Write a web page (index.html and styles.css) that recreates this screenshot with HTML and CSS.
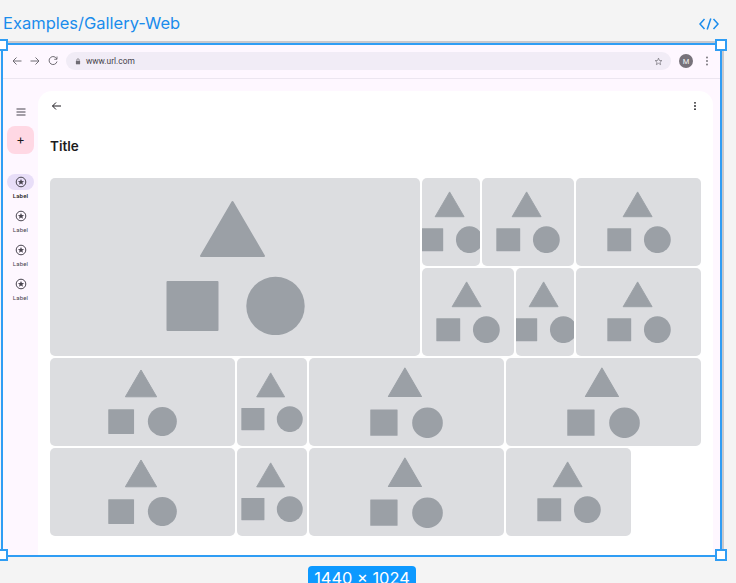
FILE: index.html
```html
<!DOCTYPE html>
<html lang="en">
<head>
  <meta charset="UTF-8" />
  <title>Examples/Gallery-Web</title>
  <link rel="stylesheet" href="styles.css">
</head>
<body>
  <svg class="defs" aria-hidden="true">
    <symbol id="shapes" viewBox="0 0 139 135">
      <polygon points="66.5,2 98,56 35,56" fill="#9ba0a6" stroke="#9ba0a6" stroke-width="2" stroke-linejoin="round"/>
      <rect x="0.5" y="81" width="52" height="50" rx="1" fill="#9ba0a6"/>
      <circle cx="109.5" cy="106" r="29.2" fill="#9ba0a6"/>
    </symbol>
    <symbol id="star-circle" viewBox="0 0 24 24">
      <circle cx="12" cy="12" r="9.6" fill="none" stroke="#49454f" stroke-width="2"/>
      <polygon points="12,5.8 13.8,10 18.2,10.3 14.8,13.2 15.9,17.6 12,15.2 8.1,17.6 9.2,13.2 5.8,10.3 10.2,10" fill="#49454f"/>
    </symbol>
  </svg>

  <header class="top-bar">
    <h1 class="page-name">Examples/Gallery-Web</h1>
    <svg class="code-icon" viewBox="0 0 20 12" fill="none" stroke="#1a8cec" stroke-width="1.5">
      <path d="M5.5 1 L1 6 L5.5 11"/>
      <path d="M11.8 0.5 L8.2 11.5"/>
      <path d="M14.5 1 L19 6 L14.5 11"/>
    </svg>
  </header>

  <div class="frame">
    <span class="handle handle-tl"></span>
    <span class="handle handle-tr"></span>
    <span class="handle handle-bl"></span>
    <span class="handle handle-br"></span>

    <div class="browser-bar">
      <svg class="bar-icon" viewBox="0 0 12 12" fill="none" stroke="#6f6c73" stroke-width="1"><path d="M10.5 6 H2 M5.5 2.5 L2 6 L5.5 9.5"/></svg>
      <svg class="bar-icon" viewBox="0 0 12 12" fill="none" stroke="#6f6c73" stroke-width="1"><path d="M1.5 6 H10 M6.5 2.5 L10 6 L6.5 9.5"/></svg>
      <svg class="bar-icon" viewBox="0 0 12 12" fill="none" stroke="#6f6c73" stroke-width="1"><path d="M9.8 4 A4 4 0 1 0 10 6.5"/><path d="M10 1.5 V4.3 H7.2" stroke-width="0.9"/></svg>
      <div class="url-pill">
        <svg class="lock-icon" viewBox="0 0 8 10"><path d="M1 4 H7 V9 H1 Z" fill="#6f6c73"/><path d="M2.3 4 V2.8 A1.7 1.7 0 0 1 5.7 2.8 V4" fill="none" stroke="#6f6c73"/></svg>
        <span class="url-text">www.url.com</span>
        <svg class="star-icon" viewBox="0 0 12 12"><polygon points="6,1.5 7.2,4.6 10.5,4.8 8,6.9 8.8,10.2 6,8.4 3.2,10.2 4,6.9 1.5,4.8 4.8,4.6" fill="none" stroke="#6f6c73" stroke-width="0.9"/></svg>
      </div>
      <span class="avatar">M</span>
      <svg class="dots-icon" viewBox="0 0 4 12"><circle cx="2" cy="2.5" r="0.9" fill="#6f6c73"/><circle cx="2" cy="6" r="0.9" fill="#6f6c73"/><circle cx="2" cy="9.5" r="0.9" fill="#6f6c73"/></svg>
    </div>

    <div class="app">
      <nav class="rail">
        <svg class="menu-icon" viewBox="0 0 12 12" fill="none" stroke="#49454f" stroke-width="1"><path d="M1.5 3 H10.5 M1.5 6 H10.5 M1.5 9 H10.5"/></svg>
        <div class="fab">+</div>
        <div class="rail-items">
          <div class="rail-item active">
            <span class="rail-pill"><svg class="rail-icon"><use href="#star-circle"/></svg></span>
            <span class="rail-label">Label</span>
          </div>
          <div class="rail-item">
            <span class="rail-pill"><svg class="rail-icon"><use href="#star-circle"/></svg></span>
            <span class="rail-label">Label</span>
          </div>
          <div class="rail-item">
            <span class="rail-pill"><svg class="rail-icon"><use href="#star-circle"/></svg></span>
            <span class="rail-label">Label</span>
          </div>
          <div class="rail-item">
            <span class="rail-pill"><svg class="rail-icon"><use href="#star-circle"/></svg></span>
            <span class="rail-label">Label</span>
          </div>
        </div>
      </nav>

      <main class="card">
        <div class="card-head">
          <svg class="head-icon" viewBox="0 0 12 12" fill="none" stroke="#1d1b20" stroke-width="1"><path d="M11 6 H2.5 M6 2.5 L2.5 6 L6 9.5"/></svg>
          <svg class="head-icon" viewBox="0 0 12 12"><circle cx="6" cy="2.8" r="0.9" fill="#1d1b20"/><circle cx="6" cy="6" r="0.9" fill="#1d1b20"/><circle cx="6" cy="9.2" r="0.9" fill="#1d1b20"/></svg>
        </div>
        <h2 class="card-title">Title</h2>

        <div class="gallery">
          <div class="gallery-top">
            <div class="tile tile-big"><svg class="shapes shapes-xl"><use href="#shapes"/></svg></div>
            <div class="gallery-side">
              <div class="row">
                <div class="tile w58"><svg class="shapes shapes-64"><use href="#shapes"/></svg></div>
                <div class="tile w92"><svg class="shapes shapes-64"><use href="#shapes"/></svg></div>
                <div class="tile w125"><svg class="shapes shapes-64"><use href="#shapes"/></svg></div>
              </div>
              <div class="row">
                <div class="tile w92"><svg class="shapes shapes-64"><use href="#shapes"/></svg></div>
                <div class="tile w58"><svg class="shapes shapes-64"><use href="#shapes"/></svg></div>
                <div class="tile w125"><svg class="shapes shapes-64"><use href="#shapes"/></svg></div>
              </div>
            </div>
          </div>
          <div class="row">
            <div class="tile w185"><svg class="shapes shapes-69"><use href="#shapes"/></svg></div>
            <div class="tile w70"><svg class="shapes shapes-62"><use href="#shapes"/></svg></div>
            <div class="tile w195"><svg class="shapes shapes-73"><use href="#shapes"/></svg></div>
            <div class="tile w195"><svg class="shapes shapes-73"><use href="#shapes"/></svg></div>
          </div>
          <div class="row">
            <div class="tile w185"><svg class="shapes shapes-69"><use href="#shapes"/></svg></div>
            <div class="tile w70"><svg class="shapes shapes-62"><use href="#shapes"/></svg></div>
            <div class="tile w195"><svg class="shapes shapes-73"><use href="#shapes"/></svg></div>
            <div class="tile w125"><svg class="shapes shapes-64"><use href="#shapes"/></svg></div>
          </div>
        </div>
      </main>
    </div>
  </div>

  <div class="size-row">
    <span class="size-badge">1440 × 1024</span>
  </div>
</body>
</html>
```

FILE: styles.css
```css
body, html {
  margin: 0;
  padding: 0;
  height: 583px;
  overflow: hidden;
}

body {
  background-color: #f4f4f4;
  font-family: Inter, Arial, sans-serif;
}

.defs {
  display: none;
}

.top-bar {
  display: flex;
  align-items: center;
  justify-content: space-between;
  height: 43px;
  padding: 0 17px 0 3px;
  box-sizing: border-box;
}

.page-name {
  margin: 3px 0 0;
  font-size: 16.5px;
  font-weight: 400;
  color: #1a8cec;
}

.code-icon {
  width: 20px;
  height: 12px;
  margin-top: 4px;
}

.frame {
  position: relative;
  box-sizing: border-box;
  display: flex;
  flex-direction: column;
  width: 721px;
  height: 514px;
  margin-left: 1px;
  border: 2px solid #2f9df4;
  background-color: #fef7ff;
  box-shadow: 2px -2px 0 #c8c8cc;
}

.handle {
  position: absolute;
  box-sizing: border-box;
  width: 12px;
  height: 12px;
  background-color: white;
  border: 2px solid #2f9df4;
  z-index: 2;
}

.handle-tl { left: -7px; top: -6px; }
.handle-tr { right: -7px; top: -6px; }
.handle-bl { left: -7px; bottom: -6px; }
.handle-br { right: -7px; bottom: -6px; }

.browser-bar {
  display: flex;
  align-items: center;
  box-sizing: border-box;
  height: 34px;
  padding: 0 11px 1px 8px;
  border-bottom: 1px solid #ece6f0;
}

.bar-icon {
  width: 12px;
  height: 12px;
  margin-right: 6px;
  flex-shrink: 0;
}

.url-pill {
  display: flex;
  align-items: center;
  flex-grow: 1;
  height: 18px;
  margin-left: 1px;
  padding: 0 8px 0 9px;
  border-radius: 9px;
  background-color: #f1ecf6;
}

.lock-icon {
  width: 6px;
  height: 7px;
}

.url-text {
  flex-grow: 1;
  margin-left: 5px;
  font-family: Roboto, Arial, sans-serif;
  font-size: 8.4px;
  color: #45434a;
}

.star-icon {
  width: 9px;
  height: 9px;
}

.avatar {
  display: flex;
  align-items: center;
  justify-content: center;
  width: 14px;
  height: 14px;
  margin-left: 8px;
  border-radius: 50%;
  background-color: #77727a;
  color: #f4f4f4;
  font-family: Roboto, Arial, sans-serif;
  font-size: 7.5px;
}

.dots-icon {
  width: 4px;
  height: 12px;
  margin-left: 12px;
}

.app {
  display: flex;
  flex-grow: 1;
  min-height: 0;
  padding: 12px 7px 0 0;
}

.rail {
  display: flex;
  flex-direction: column;
  align-items: center;
  width: 35px;
  flex-shrink: 0;
  padding-top: 15px;
}

.menu-icon {
  width: 12px;
  height: 12px;
}

.fab {
  display: flex;
  align-items: center;
  justify-content: center;
  box-sizing: border-box;
  width: 27px;
  height: 28px;
  margin-top: 8px;
  padding-bottom: 2px;
  border-radius: 8px;
  background-color: #ffd8e4;
  color: #1d1b20;
  font-size: 13px;
}

.rail-items {
  display: flex;
  flex-direction: column;
  margin-top: 20px;
}

.rail-item {
  display: flex;
  flex-direction: column;
  align-items: center;
  height: 34px;
}

.rail-pill {
  display: flex;
  align-items: center;
  justify-content: center;
  width: 27px;
  height: 16px;
  border-radius: 8px;
}

.active .rail-pill {
  background-color: #e8def8;
}

.rail-icon {
  width: 12px;
  height: 12px;
}

.rail-label {
  margin-top: 2px;
  font-family: Roboto, Arial, sans-serif;
  font-size: 6px;
  line-height: 8px;
  letter-spacing: 0.2px;
  color: #49454f;
}

.active .rail-label {
  font-weight: 500;
  color: #1d1b20;
}

.card {
  flex-grow: 1;
  min-width: 0;
  box-sizing: border-box;
  padding: 9px 12px 0;
  border-radius: 14px 14px 0 0;
  background-color: white;
}

.card-head {
  display: flex;
  justify-content: space-between;
}

.head-icon {
  width: 12px;
  height: 12px;
}

.card-title {
  margin: 24px 0 22px;
  font-size: 13.5px;
  font-weight: 600;
  line-height: 20px;
  color: #1d1b20;
}

.gallery {
  display: flex;
  flex-direction: column;
  gap: 2px;
}

.gallery-top {
  display: flex;
  gap: 2px;
}

.gallery-side {
  display: flex;
  flex-direction: column;
  gap: 2px;
}

.row {
  display: flex;
  gap: 2px;
  height: 88px;
}

.tile {
  display: flex;
  align-items: center;
  justify-content: center;
  overflow: hidden;
  flex-shrink: 0;
  border-radius: 5px;
  background-color: #dcdde0;
}

.tile-big {
  width: 370px;
  height: 178px;
}

.w58 { width: 58px; }
.w70 { width: 70px; }
.w92 { width: 92px; }
.w125 { width: 125px; }
.w185 { width: 185px; }
.w195 { width: 195px; }

.shapes {
  flex-shrink: 0;
}

.shapes-xl { width: 139px; height: 135px; }
.shapes-62 { width: 62px; height: 60px; }
.shapes-64 { width: 64px; height: 62px; }
.shapes-69 { width: 69px; height: 67px; }
.shapes-73 { width: 73px; height: 71px; }

.size-row {
  display: flex;
  justify-content: center;
  margin-top: 9px;
  padding-right: 12px;
}

.size-badge {
  padding: 3px 6.5px 4px;
  border-radius: 4px;
  background-color: #0d99ff;
  color: white;
  font-size: 16.4px;
  line-height: 19px;
}
```
